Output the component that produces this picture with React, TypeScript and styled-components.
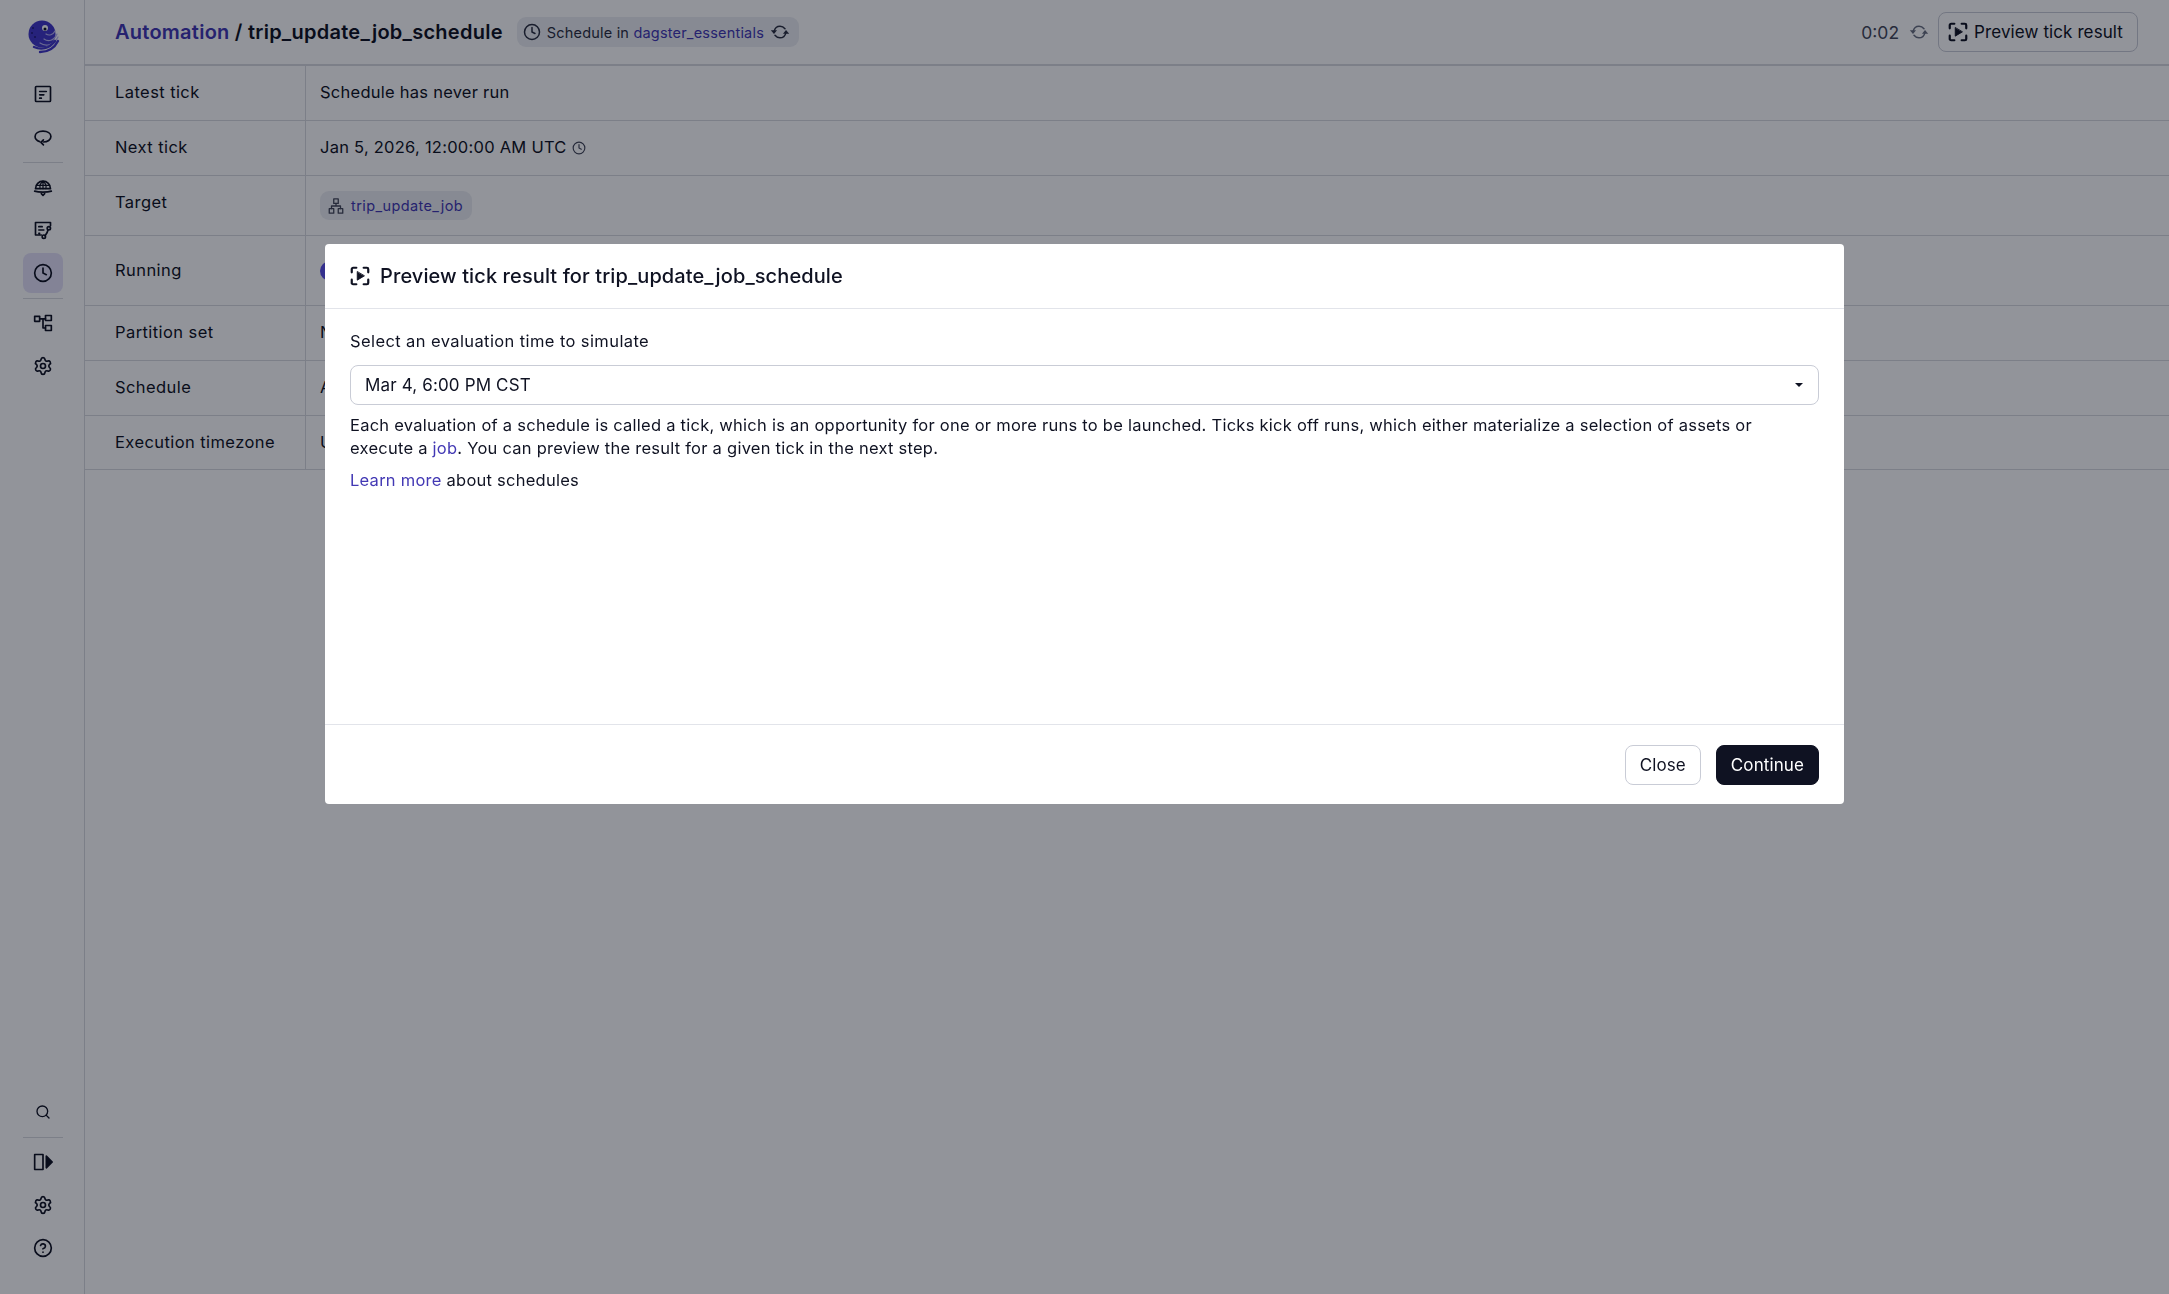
import { ReactNode } from "react";
import styled, { createGlobalStyle } from "styled-components";
import { Clock, Search, Settings, CircleHelp } from "lucide-react";

const GlobalStyle = createGlobalStyle`
  html, body {
    margin: 0;
    height: 100%;
    background: #fff;
    font-family: Inter, "Noto Sans", sans-serif;
    font-size: 16px;
    color: #0f1222;
  }
  * { box-sizing: border-box; }
`;

const Page = styled.div`
  display: flex;
  height: 1294px;
  overflow: hidden;
`;

const Sidebar = styled.nav`
  width: 85px;
  flex-shrink: 0;
  border-right: 1px solid #d8dae0;
  display: flex;
  flex-direction: column;
  align-items: center;
  padding: 20px 0 23px 2px;
`;

const Logo = styled.div`
  width: 34px;
  height: 34px;
  margin-bottom: 20px;
  display: flex;
`;

const NavItem = styled.div<{ $active?: boolean }>`
  width: 40px;
  height: 40px;
  margin-bottom: 3px;
  border-radius: 8px;
  display: flex;
  align-items: center;
  justify-content: center;
  color: #0f1222;
  background: ${(p) => (p.$active ? "#e4e2f8" : "transparent")};
`;

const NavDivider = styled.div`
  width: 40px;
  height: 1px;
  margin: 2px 0 4px;
  background: #d8dae0;
`;

const Spacer = styled.div`
  flex: 1;
`;

const Main = styled.main`
  flex: 1;
  min-width: 0;
`;

const Header = styled.header`
  height: 66px;
  border-bottom: 2px solid #d8dae0;
  padding: 0 31px 0 30px;
  display: flex;
  align-items: center;
`;

const Crumbs = styled.h1`
  margin: 0;
  font-size: 20px;
  font-weight: 600;
  letter-spacing: 0.25px;
  color: #0f1222;
`;

const CrumbLink = styled.a`
  color: #4238b4;
`;

const Pill = styled.div`
  margin-left: 14px;
  height: 30px;
  padding: 0 9px 0 6px;
  border-radius: 9px;
  background: #eceef2;
  display: flex;
  align-items: center;
  gap: 6px;
  font-size: 14.5px;
  letter-spacing: 0.2px;
  color: #2b2f40;
`;

const Accent = styled.a`
  color: #4238b4;
`;

const HeaderRight = styled.div`
  margin-left: auto;
  display: flex;
  align-items: center;
`;

const Timer = styled.span`
  font-size: 17.5px;
  color: #434759;
  margin-right: 10px;
`;

const RefreshWrap = styled.span`
  display: flex;
  margin-right: 9px;
  color: #6a7080;
`;

const OutlineButton = styled.button`
  height: 40px;
  padding: 0 14px 0 8px;
  display: flex;
  align-items: center;
  gap: 5px;
  background: transparent;
  border: 1px solid #c9ccd6;
  border-radius: 8px;
  font: inherit;
  font-size: 17px;
  letter-spacing: 0.1px;
  color: #0f1222;
`;

const InfoTable = styled.div`
  display: flex;
  flex-direction: column;
`;

const Row = styled.div<{ $height: number }>`
  display: grid;
  grid-template-columns: 221px 1fr;
  border-bottom: 1px solid #d8dae0;
  min-height: ${(p) => p.$height}px;
`;

const KeyCell = styled.div<{ $tall?: boolean }>`
  padding: ${(p) => (p.$tall ? "23px" : "15px")} 16px 0 30px;
  border-right: 1px solid #d8dae0;
  line-height: 22px;
  font-size: 16.5px;
  letter-spacing: 0.42px;
  color: #0f1222;
`;

const ValueCell = styled.div<{ $tall?: boolean }>`
  padding: ${(p) => (p.$tall ? "25px" : "15px")} 14px 0;
  line-height: 22px;
  font-size: 16.5px;
  letter-spacing: 0.25px;
  color: #0f1222;
  display: flex;
  align-items: flex-start;
  gap: 5px;
`;

const TinyClock = styled.span`
  display: flex;
  margin-top: 5px;
  color: #434759;
`;

const JobTag = styled.div`
  height: 29px;
  padding: 0 9px 0 7px;
  border-radius: 9px;
  background: #eceef2;
  display: flex;
  align-items: center;
  gap: 6px;
  font-size: 14.5px;
  letter-spacing: 0.4px;
  color: #4238b4;
`;

const JobIconWrap = styled.span`
  display: flex;
  color: #434759;
`;

const Toggle = styled.div`
  width: 40px;
  height: 20px;
  border-radius: 10px;
  background: #5b4fe8;
`;

const Overlay = styled.div`
  position: fixed;
  inset: 0;
  background: rgba(3, 6, 21, 0.43);
  display: flex;
  justify-content: center;
  align-items: flex-start;
  padding-top: 244px;
`;

const Modal = styled.section`
  width: 1519px;
  height: 560px;
  background: #fff;
  border-radius: 4px;
  display: flex;
  flex-direction: column;
`;

const ModalHeader = styled.header`
  height: 65px;
  flex-shrink: 0;
  border-bottom: 1px solid #e2e4ea;
  padding: 0 25px 0 24px;
  display: flex;
  align-items: center;
  gap: 9px;
`;

const ModalTitle = styled.h2`
  margin: 0;
  font-size: 20px;
  font-weight: 500;
  letter-spacing: 0.1px;
  color: #0f1222;
`;

const ModalBody = styled.div`
  flex: 1;
  padding: 20px 25px 0;
`;

const FieldLabel = styled.div`
  font-size: 16.5px;
  letter-spacing: 0.4px;
  line-height: 24px;
  margin-bottom: 12px;
`;

const SelectBox = styled.div`
  height: 40px;
  border: 1px solid #c9ccd6;
  border-radius: 8px;
  padding: 0 14px;
  display: flex;
  align-items: center;
  justify-content: space-between;
  font-size: 17px;
  letter-spacing: 0.15px;
`;

const Caret = styled.span`
  width: 0;
  height: 0;
  margin-right: 1px;
  border-left: 4px solid transparent;
  border-right: 4px solid transparent;
  border-top: 4px solid #0f1222;
`;

const Paragraph = styled.p<{ $gap: number }>`
  margin: ${(p) => p.$gap}px 0 0;
  font-size: 16.5px;
  letter-spacing: 0.25px;
  line-height: 23px;
`;

const ModalFooter = styled.footer`
  height: 80px;
  flex-shrink: 0;
  border-top: 1px solid #e2e4ea;
  padding: 0 25px;
  display: flex;
  align-items: center;
  justify-content: flex-end;
  gap: 15px;
`;

const FooterButton = styled.button<{ $primary?: boolean }>`
  height: 40px;
  padding: 0 14px;
  border-radius: 8px;
  border: 1px solid ${(p) => (p.$primary ? "#0f1222" : "#c9ccd6")};
  background: ${(p) => (p.$primary ? "#0f1222" : "#fff")};
  color: ${(p) => (p.$primary ? "#fff" : "#0f1222")};
  font: inherit;
  font-size: 17px;
  letter-spacing: 0.1px;
`;

const Svg = ({ size = 20, children }: { size?: number; children: ReactNode }) => (
  <svg
    width={size}
    height={size}
    viewBox="0 0 24 24"
    fill="none"
    stroke="currentColor"
    strokeWidth="2"
    strokeLinecap="round"
    strokeLinejoin="round"
  >
    {children}
  </svg>
);

const PreviewIcon = ({ size = 22 }: { size?: number }) => (
  <Svg size={size}>
    <path d="M3 8V4.500C3 3.700 3.700 3 4.500 3H8M16 3h3.500C20.300 3 21 3.700 21 4.500V8M21 16v3.500c0 .8-.7 1.500-1.500 1.500H16M8 21H4.500C3.700 21 3 20.300 3 19.500V16" strokeWidth="2.400" />
    <path d="M9 7.500v9l7.500-4.500z" fill="currentColor" stroke="currentColor" strokeWidth="1" />
  </Svg>
);

const RefreshIcon = ({ size = 20 }: { size?: number }) => (
  <Svg size={size}>
    <path d="M5 11c.8-3.600 3.600-6 7-6 2.500 0 4.500 1.100 6 3" strokeWidth="1.800" />
    <path d="M19 13c-.8 3.600-3.600 6-7 6-2.500 0-4.500-1.100-6-3" strokeWidth="1.800" />
    <path d="M15.500 14h7.500l-3.750-4.500z" fill="currentColor" stroke="none" />
    <path d="M1 10h7.500l-3.750 4.500z" fill="currentColor" stroke="none" />
  </Svg>
);

const JobIcon = () => (
  <Svg size={18}>
    <rect x="9" y="2.500" width="6" height="6" strokeWidth="1.700" />
    <rect x="3" y="15.500" width="6" height="6" strokeWidth="1.700" />
    <rect x="15" y="15.500" width="6" height="6" strokeWidth="1.700" />
    <path d="M12 8.500V12M6 15.500V12h12v3.500" strokeWidth="1.700" />
  </Svg>
);

const OverviewIcon = () => (
  <Svg size={20}>
    <rect x="3" y="3" width="18" height="18" rx="1" />
    <path d="M8 9h8M8 13h5M8 17h2" />
  </Svg>
);

const RunsIcon = () => (
  <Svg size={20}>
    <path d="M8 17.500C4.500 16.500 2.500 14.300 2.500 11.500c0-3.900 4-6.500 9.500-6.500s9.500 2.600 9.500 6.500-4 6.500-9 6.500" />
    <path d="M12.500 15.500l-3 3 3 3" />
  </Svg>
);

const CatalogIcon = () => (
  <Svg size={20}>
    <path d="M3 14a9 9 0 0 1 18 0z" />
    <path d="M12 5v9M8.500 14c-.8-3.500 0-6.500 3.500-9 3.500 2.500 4.300 5.500 3.500 9M4 10h16" strokeWidth="1.500" />
    <path d="M2 17c5 1.500 15 1.500 20 0M10 20l2 2 2-2" />
  </Svg>
);

const JobsIcon = () => (
  <Svg size={20}>
    <path d="M21 7V3H3v15h7M7 8h4M7 12h6M7 16h1" />
    <circle cx="19" cy="10" r="2" />
    <circle cx="13" cy="20" r="2" />
    <path d="M18 12c-.5 3-2 5-3.500 7" />
  </Svg>
);

const DeploymentIcon = () => (
  <Svg size={20}>
    <rect x="2" y="4" width="6" height="6" />
    <rect x="15" y="3" width="7" height="6" />
    <rect x="15" y="15" width="7" height="6" />
    <path d="M8 7h7M12 7v11h3" />
  </Svg>
);

const PanelIcon = () => (
  <Svg size={20}>
    <rect x="2" y="3" width="10" height="18" />
    <path d="M16 5v14l7-7z" fill="currentColor" stroke="currentColor" />
  </Svg>
);

const DagsterLogo = () => (
  <svg width="34" height="34" viewBox="0 0 34 34" fill="none">
    <circle cx="16" cy="14" r="13.500" fill="#4238c8" />
    <path d="M20 14c3 2 7 1 9-3M18 19c4 3 10 2 13-5M14 23c6 4 14 2 18-6" stroke="#b9b5f0" strokeWidth="1.200" strokeLinecap="round" fill="none" />
    <path d="M8 27c7 3 15 2 21-6M14 32c7 0 14-3 18-11" stroke="#4238c8" strokeWidth="2.400" strokeLinecap="round" />
    <circle cx="19" cy="8" r="3" fill="#fff" />
    <circle cx="19" cy="9" r="1.500" fill="#0f1222" />
    <circle cx="6" cy="13" r="1" fill="#221b7a" />
    <circle cx="9" cy="17" r="1" fill="#221b7a" />
    <circle cx="7" cy="8" r="1" fill="#221b7a" />
  </svg>
);

export default function App() {
  return (
    <>
      <GlobalStyle />
      <Page>
        <Sidebar>
          <Logo>
            <DagsterLogo />
          </Logo>
          <NavItem><OverviewIcon /></NavItem>
          <NavItem><RunsIcon /></NavItem>
          <NavDivider />
          <NavItem><CatalogIcon /></NavItem>
          <NavItem><JobsIcon /></NavItem>
          <NavItem $active><Clock size={20} /></NavItem>
          <NavDivider />
          <NavItem><DeploymentIcon /></NavItem>
          <NavItem><Settings size={20} /></NavItem>
          <Spacer />
          <NavItem><Search size={16} /></NavItem>
          <NavDivider />
          <NavItem><PanelIcon /></NavItem>
          <NavItem><Settings size={20} /></NavItem>
          <NavItem><CircleHelp size={20} /></NavItem>
        </Sidebar>
        <Main>
          <Header>
            <Crumbs>
              <CrumbLink>Automation</CrumbLink> / trip_update_job_schedule
            </Crumbs>
            <Pill>
              <Clock size={18} />
              <span>
                Schedule in <Accent>dagster_essentials</Accent>
              </span>
              <RefreshIcon size={20} />
            </Pill>
            <HeaderRight>
              <Timer>0:02</Timer>
              <RefreshWrap><RefreshIcon size={20} /></RefreshWrap>
              <OutlineButton>
                <PreviewIcon />
                Preview tick result
              </OutlineButton>
            </HeaderRight>
          </Header>
          <InfoTable>
            <Row $height={55}>
              <KeyCell>Latest tick</KeyCell>
              <ValueCell>Schedule has never run</ValueCell>
            </Row>
            <Row $height={55}>
              <KeyCell>Next tick</KeyCell>
              <ValueCell>
                Jan 5, 2026, 12:00:00 AM UTC
                <TinyClock><Clock size={14} /></TinyClock>
              </ValueCell>
            </Row>
            <Row $height={60}>
              <KeyCell>Target</KeyCell>
              <ValueCell>
                <JobTag>
                  <JobIconWrap><JobIcon /></JobIconWrap>
                  trip_update_job
                </JobTag>
              </ValueCell>
            </Row>
            <Row $height={70}>
              <KeyCell $tall>Running</KeyCell>
              <ValueCell $tall><Toggle /></ValueCell>
            </Row>
            <Row $height={55}>
              <KeyCell>Partition set</KeyCell>
              <ValueCell>None</ValueCell>
            </Row>
            <Row $height={55}>
              <KeyCell>Schedule</KeyCell>
              <ValueCell>At 12:00 AM, on day 5 of the month</ValueCell>
            </Row>
            <Row $height={54}>
              <KeyCell>Execution timezone</KeyCell>
              <ValueCell>UTC</ValueCell>
            </Row>
          </InfoTable>
        </Main>
      </Page>
      <Overlay>
        <Modal>
          <ModalHeader>
            <PreviewIcon />
            <ModalTitle>Preview tick result for trip_update_job_schedule</ModalTitle>
          </ModalHeader>
          <ModalBody>
            <FieldLabel>Select an evaluation time to simulate</FieldLabel>
            <SelectBox>
              Mar 4, 6:00 PM CST
              <Caret />
            </SelectBox>
            <Paragraph $gap={9}>
              Each evaluation of a schedule is called a tick, which is an opportunity for one or more runs to be launched. Ticks kick off runs, which either materialize a selection of assets or execute a <Accent>job</Accent>. You can preview the result for a given tick in the next step.
            </Paragraph>
            <Paragraph $gap={9}>
              <Accent>Learn more</Accent> about schedules
            </Paragraph>
          </ModalBody>
          <ModalFooter>
            <FooterButton>Close</FooterButton>
            <FooterButton $primary>Continue</FooterButton>
          </ModalFooter>
        </Modal>
      </Overlay>
    </>
  );
}
